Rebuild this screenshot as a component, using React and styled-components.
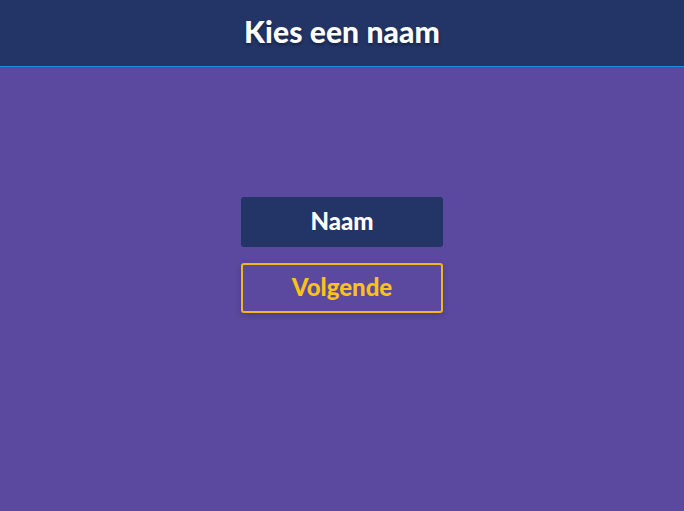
import React from 'react';
import styled, { createGlobalStyle } from 'styled-components';

const GlobalStyle = createGlobalStyle`
  html, body {
    margin: 0;
    padding: 0;
    height: 100%;
    background: #5a499e;
    font-family: Lato, "Noto Sans", sans-serif;
  }
  #root {
    min-height: 100%;
  }
`;

const Page = styled.div`
  min-height: 100vh;
  display: flex;
  flex-direction: column;
  background: #5a499e;
`;

const Header = styled.header`
  box-sizing: border-box;
  height: 67px;
  padding-bottom: 4px;
  background: #233466;
  border-bottom: 1px solid #1e8fe0;
  display: flex;
  align-items: center;
  justify-content: center;
`;

const Title = styled.h1`
  margin: 0;
  color: #fff;
  font-size: 30px;
  font-weight: 900;
  letter-spacing: 0.1px;
  text-shadow: 0 2px 3px rgba(0, 0, 0, 0.35);
`;

const Form = styled.div`
  display: flex;
  flex-direction: column;
  align-items: center;
  gap: 16px;
  padding-top: 130px;
`;

const NameField = styled.input`
  box-sizing: border-box;
  width: 202px;
  height: 50px;
  padding: 0 0 3px;
  border: none;
  border-radius: 3px;
  background: #233466;
  color: #fff;
  font-family: inherit;
  font-size: 24px;
  font-weight: 900;
  text-align: center;
  outline: none;
  &::placeholder {
    color: #fff;
    opacity: 1;
  }
`;

const NextButton = styled.button`
  box-sizing: border-box;
  width: 202px;
  height: 50px;
  padding: 0 0 3px;
  border: 2px solid #f2b51c;
  border-radius: 3px;
  background: transparent;
  color: #fcc21a;
  font-family: inherit;
  font-size: 24px;
  font-weight: 900;
  box-shadow: 0 2px 6px rgba(0, 0, 0, 0.18);
  cursor: pointer;
`;

export default function App() {
  return (
    <>
      <GlobalStyle />
      <Page>
        <Header>
          <Title>Kies een naam</Title>
        </Header>
        <Form>
          <NameField placeholder="Naam" />
          <NextButton>Volgende</NextButton>
        </Form>
      </Page>
    </>
  );
}
